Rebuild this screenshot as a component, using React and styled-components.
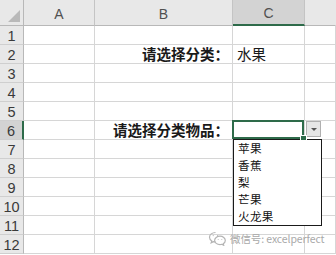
import React from "react";
import styled, { createGlobalStyle } from "styled-components";

const GlobalStyle = createGlobalStyle`
  html, body { margin: 0; padding: 0; background: #ffffff; }
  body { font-family: "Liberation Sans", "Noto Sans CJK SC", sans-serif; }
`;

const Sheet = styled.div`
  position: relative;
  width: 336px;
  height: 255px;
  overflow: hidden;
  display: grid;
  grid-template-columns: 24px 71px 138px 72px 31px;
  grid-template-rows: 26px repeat(12, 19px) 1fr;
  background: #ffffff;
`;

const Corner = styled.div`
  position: relative;
  background: #e8e8e8;
  border-right: 1px solid #b8b8b8;
  border-bottom: 1px solid #b8b8b8;
  box-sizing: border-box;
`;

const CornerTriangle = styled.div`
  position: absolute;
  right: 3px;
  bottom: 3px;
  width: 0;
  height: 0;
  border-left: 12px solid transparent;
  border-bottom: 12px solid #b9b9b9;
`;

const ColHeader = styled.div`
  box-sizing: border-box;
  display: flex;
  align-items: flex-end;
  justify-content: center;
  padding-bottom: 3px;
  background: ${(p) => (p.$selected ? "#d3d3d3" : "#e8e8e8")};
  border-right: 1px solid ${(p) => (p.$last ? "transparent" : "#c4c4c4")};
  border-bottom: ${(p) => (p.$selected ? "2px solid #2e6b4a" : "1px solid #b8b8b8")};
  color: #505050;
  font-size: 14px;
`;

const RowHeader = styled.div`
  box-sizing: border-box;
  display: flex;
  align-items: flex-end;
  justify-content: center;
  padding-bottom: 1px;
  background: ${(p) => (p.$selected ? "#d3d3d3" : "#e8e8e8")};
  border-right: ${(p) => (p.$selected ? "2px solid #2e6b4a" : "1px solid #b8b8b8")};
  border-bottom: 1px solid #cfcfcf;
  color: #3a3a3a;
  font-size: 14.5px;
  line-height: 1;
`;

const Cell = styled.div`
  position: relative;
  box-sizing: border-box;
  display: flex;
  align-items: flex-end;
  justify-content: ${(p) => (p.$align === "right" ? "flex-end" : "flex-start")};
  padding: 0 3px 0 4px;
  border-right: 1px solid #d6d6d6;
  border-bottom: 1px solid #d6d6d6;
  font-family: "Noto Sans CJK SC", "Liberation Sans", sans-serif;
  font-size: 14.5px;
  font-weight: ${(p) => (p.$bold ? 700 : 400)};
  color: #1a1a1a;
  line-height: 18px;
  white-space: nowrap;
`;

const ActiveFrame = styled.div`
  position: absolute;
  top: -1px;
  left: -1px;
  right: 0;
  bottom: 0;
  border: 2px solid #2e6b4a;
  pointer-events: none;
`;

const FillHandle = styled.div`
  position: absolute;
  right: -3px;
  bottom: -2px;
  width: 5px;
  height: 4px;
  background: #2e6b4a;
  border: 1px solid #ffffff;
  z-index: 3;
`;

const ArrowButton = styled.div`
  position: absolute;
  top: 0;
  left: calc(100% + 2px);
  width: 15px;
  height: 16px;
  box-sizing: border-box;
  background: #e6e6e6;
  border: 1px solid #b0b0b0;
  display: flex;
  align-items: center;
  justify-content: center;
  z-index: 2;
`;

const ArrowGlyph = styled.div`
  width: 0;
  height: 0;
  border-left: 3px solid transparent;
  border-right: 3px solid transparent;
  border-top: 3px solid #555555;
`;

const List = styled.ul`
  position: absolute;
  top: 100%;
  left: 0;
  width: 89px;
  height: 87px;
  box-sizing: border-box;
  margin: 0;
  padding: 0;
  list-style: none;
  background: #ffffff;
  border: 1px solid #1a1a1a;
  z-index: 2;
`;

const ListItem = styled.li`
  height: 17px;
  line-height: 17px;
  padding-left: 4px;
  overflow: hidden;
  font-family: "Noto Sans CJK SC", "Liberation Sans", sans-serif;
  font-size: 11.6px;
  letter-spacing: 0.3px;
  color: #111111;
`;

const Watermark = styled.div`
  position: absolute;
  left: 208px;
  top: 231px;
  display: flex;
  align-items: center;
  gap: 3px;
  color: #a9a9a9;
  font-family: "Noto Sans CJK SC", "Liberation Sans", sans-serif;
  font-size: 10.5px;
  letter-spacing: -0.1px;
  white-space: nowrap;
  z-index: 4;
`;

const WeChatIcon = () => (
  <svg width="19" height="15" viewBox="0 0 19 15" fill="none" stroke="#b4b4b4" strokeWidth="1.2">
    <path d="M7.5 1.5c-3.3 0-6 2.1-6 4.7 0 1.5.9 2.8 2.3 3.7l-.6 1.8 2.2-1.1c.7.2 1.4.3 2.1.3" />
    <path d="M12 5.2c-3 0-5.4 1.9-5.4 4.2s2.4 4.2 5.4 4.2c.6 0 1.2-.1 1.8-.3l1.9 1-.5-1.6c1.3-.8 2.1-2 2.1-3.3 0-2.3-2.4-4.2-5.3-4.2z" />
    <circle cx="5.2" cy="4.6" r="0.6" fill="#b4b4b4" stroke="none" />
    <circle cx="9.6" cy="4.6" r="0.6" fill="#b4b4b4" stroke="none" />
    <circle cx="10.2" cy="8.6" r="0.5" fill="#b4b4b4" stroke="none" />
    <circle cx="13.8" cy="8.6" r="0.5" fill="#b4b4b4" stroke="none" />
  </svg>
);

const columns = ["A", "B", "C", "D"];
const cells = {
  "B2": { text: "请选择分类：", align: "right", bold: true },
  "C2": { text: "水果" },
  "B6": { text: "请选择分类物品：", align: "right", bold: true },
};
const items = ["苹果", "香蕉", "梨", "芒果", "火龙果"];

export default function App() {
  const rows = Array.from({ length: 12 }, (_, i) => i + 1);
  return (
    <>
      <GlobalStyle />
      <Sheet>
        <Corner>
          <CornerTriangle />
        </Corner>
        {columns.map((c) => (
          <ColHeader key={c} $selected={c === "C"} $last={c === "D"}>
            {c === "D" ? "" : c}
          </ColHeader>
        ))}
        {rows.map((r) => (
          <React.Fragment key={r}>
            <RowHeader $selected={r === 6}>{r}</RowHeader>
            {columns.map((c) => {
              const id = c + r;
              const data = cells[id];
              if (id === "C6") {
                return (
                  <Cell key={id}>
                    <ActiveFrame />
                    <FillHandle />
                    <ArrowButton>
                      <ArrowGlyph />
                    </ArrowButton>
                    <List>
                      {items.map((it) => (
                        <ListItem key={it}>{it}</ListItem>
                      ))}
                    </List>
                  </Cell>
                );
              }
              return (
                <Cell key={id} $align={data?.align} $bold={data?.bold}>
                  {data?.text}
                </Cell>
              );
            })}
          </React.Fragment>
        ))}
        <Watermark>
          <WeChatIcon />
          <span>微信号: excelperfect</span>
        </Watermark>
      </Sheet>
    </>
  );
}
